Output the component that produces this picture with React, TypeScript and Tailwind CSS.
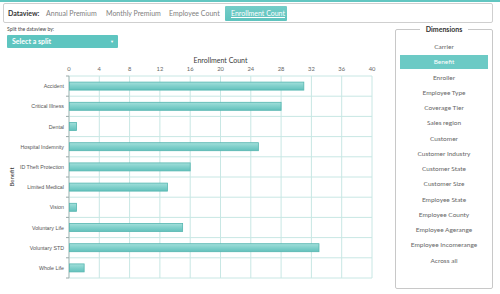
import React from "react";

const benefits = [
  { name: "Accident", value: 31 },
  { name: "Critical Illness", value: 28 },
  { name: "Dental", value: 1 },
  { name: "Hospital Indemnity", value: 25 },
  { name: "ID Theft Protection", value: 16 },
  { name: "Limited Medical", value: 13 },
  { name: "Vision", value: 1 },
  { name: "Voluntary Life", value: 15 },
  { name: "Voluntary STD", value: 33 },
  { name: "Whole Life", value: 2 },
];

const dimensions = [
  "Carrier",
  "Benefit",
  "Enroller",
  "Employee Type",
  "Coverage Tier",
  "Sales region",
  "Customer",
  "Customer Industry",
  "Customer State",
  "Customer Size",
  "Employee State",
  "Employee County",
  "Employee Agerange",
  "Employee Incomerange",
  "Across all",
];

// plot geometry, in page pixels
const X0 = 69;
const X1 = 372;
const Y0 = 75;
const ROW = 20.2;
const scale = (X1 - X0) / 40;

function Chart() {
  const ticks = [0, 4, 8, 12, 16, 20, 24, 28, 32, 36, 40];
  const Y1 = Y0 + ROW * benefits.length;
  return (
    <svg width={392} height={240} viewBox="0 50 392 240" className="block">
      <defs>
        <linearGradient id="bar" x1="0" y1="0" x2="0" y2="1">
          <stop offset="0" stopColor="#a3dfdb" />
          <stop offset="0.5" stopColor="#80d0cb" />
          <stop offset="1" stopColor="#63c1bc" />
        </linearGradient>
      </defs>
      <text x={220.5} y={61.5} textAnchor="middle" fontSize={7} fill="#3a3a3a" fontFamily="Lato, sans-serif">
        Enrollment Count
      </text>
      {ticks.map((t) => (
        <text key={t} x={X0 + t * scale} y={69.5} textAnchor="middle" fontSize={5.8} fill="#666" fontFamily="Lato, sans-serif">
          {t}
        </text>
      ))}
      {ticks.map((t) => (
        <line key={"v" + t} x1={X0 + t * scale} x2={X0 + t * scale} y1={Y0} y2={Y1} stroke="#c8e7e4" strokeWidth={1} />
      ))}
      {benefits.map((_, i) => (
        <line key={"h" + i} x1={X0} x2={X1} y1={Y0 + ROW * (i + 1)} y2={Y0 + ROW * (i + 1)} stroke="#c8e7e4" strokeWidth={1} />
      ))}
      <line x1={X0} x2={X1} y1={Y0} y2={Y0} stroke="#c8e7e4" strokeWidth={1} />
      <line x1={X0} x2={X0} y1={Y0} y2={Y1} stroke="#b0bebd" strokeWidth={1} />
      {benefits.map((_, i) => (
        <line key={"t" + i} x1={X0 - 3} x2={X0} y1={Y0 + ROW * i} y2={Y0 + ROW * i} stroke="#9aaaaa" strokeWidth={1} />
      ))}
      <line x1={X0 - 3} x2={X0} y1={Y1} y2={Y1} stroke="#9aaaaa" strokeWidth={1} />
      {benefits.map((b, i) => {
        const cy = Y0 + ROW * i + ROW / 2;
        return (
          <g key={b.name}>
            <text x={64} y={cy + 2} textAnchor="end" fontSize={5.3} fill="#555" fontFamily="'Liberation Sans', Arial, sans-serif">
              {b.name}
            </text>
            <rect x={X0 + 0.5} y={cy - 4} width={b.value * scale - 0.5} height={8} fill="url(#bar)" stroke="#55b6b0" strokeWidth={0.8} />
          </g>
        );
      })}
      <text
        x={0}
        y={0}
        transform="translate(14 176) rotate(-90)"
        textAnchor="middle"
        fontSize={6}
        fill="#333"
        fontFamily="Lato, sans-serif"
      >
        Benefit
      </text>
    </svg>
  );
}

export default function App() {
  return (
    <div className="h-[294px] w-[500px] overflow-hidden bg-white font-['Lato',sans-serif]">
      <div className="h-[2px] bg-[#62c6c1]" />
      <div className="mx-[3px] mt-[1px] flex h-[20px] w-[490px] items-center rounded-[2px] border border-[#cfcfcf] pl-[4px] text-[7px] text-[#808080]">
        <span className="w-[38px] font-bold text-[#333]">Dataview:</span>
        <span className="w-[60px]">Annual Premium</span>
        <span className="w-[63px]">Monthly Premium</span>
        <span className="w-[56px]">Employee Count</span>
        <span className="flex h-[15px] w-[62px] items-center rounded-[1px] bg-gradient-to-b from-[#74cdc8] to-[#5ec3be] pl-[6px] text-white underline">
          Enrollment Count
        </span>
      </div>
      <div className="flex">
        <div className="w-[395px]">
          <div className="ml-[7px] mt-[3px] text-[5px] leading-[6px] text-[#444]">Split the dataview by:</div>
          <div className="ml-[7px] mt-[3px] flex h-[13px] w-[111px] items-center justify-between rounded-[1px] bg-[#5ec5c0] pl-[5px] pr-[4px] text-[7px] font-bold text-white">
            <span>Select a split</span>
            <span className="text-[4px]">▼</span>
          </div>
          <div className="mt-[3px]">
            <Chart />
          </div>
        </div>
        <fieldset className="mt-[2px] h-[264px] w-[98px] rounded-[2px] border border-[#c8c8c8] px-[4px]">
          <legend className="mx-auto px-[6px] text-[7px] leading-[8px] font-bold text-[#333]">Dimensions</legend>
          <div className="mt-[7px]">
            {dimensions.map((d) => (
              <div
                key={d}
                className={
                  d === "Benefit"
                    ? "my-[1.25px] flex h-[14px] items-center justify-center bg-[#6ccac5] text-[6.5px] text-white"
                    : "my-[1.25px] flex h-[14px] items-center justify-center text-[6.5px] text-[#666]"
                }
              >
                {d}
              </div>
            ))}
          </div>
        </fieldset>
      </div>
    </div>
  );
}
